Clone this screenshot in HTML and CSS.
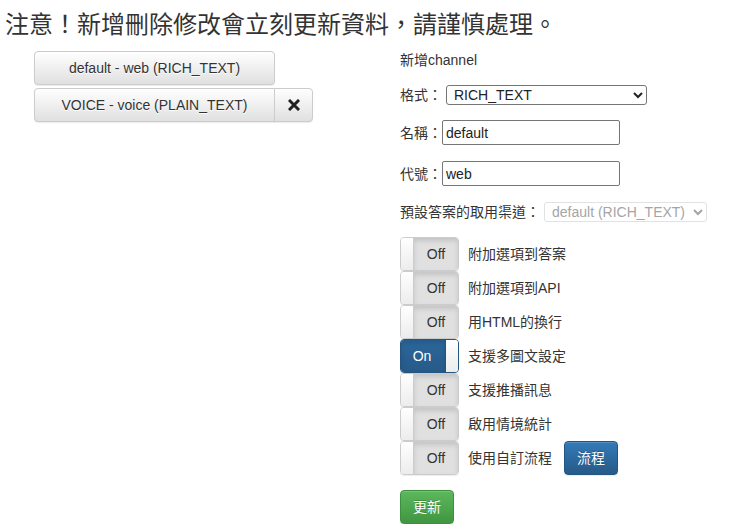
FILE: index.html
```html
<!DOCTYPE html>
<html lang="zh-Hant">
<head>
<meta charset="utf-8">
<link rel="stylesheet" href="styles.css">
</head>
<body>
<h1 class="notice">注意！新增刪除修改會立刻更新資料，請謹慎處理。</h1>
<div class="layout">
  <div class="channels">
    <div class="channel-row">
      <button class="btn btn-default channel-btn">default - web (RICH_TEXT)</button>
    </div>
    <div class="channel-row">
      <button class="btn btn-default channel-btn joined-left">VOICE - voice (PLAIN_TEXT)</button><button class="btn btn-default remove-btn"><svg width="12" height="12" viewBox="0 0 12 12"><path d="M2 2 L10 10 M10 2 L2 10" stroke="#222" stroke-width="3" stroke-linecap="square"/></svg></button>
    </div>
  </div>
  <div class="editor">
    <div class="heading">新增channel</div>
    <div class="field field-format">
      <label>格式：</label>
      <select class="sel sel-format"><option>RICH_TEXT</option></select>
    </div>
    <div class="field field-input">
      <label>名稱：</label><input class="txt" type="text" value="default">
    </div>
    <div class="field field-input">
      <label>代號：</label><input class="txt" type="text" value="web">
    </div>
    <div class="field field-default">
      <label>預設答案的取用渠道：</label>
      <select class="sel sel-default" disabled><option>default (RICH_TEXT)</option></select>
    </div>
    <div class="toggles">
      <div class="toggle-row"><span class="toggle off"><span class="handle"></span><span class="state">Off</span></span><span class="toggle-label">附加選項到答案</span></div>
      <div class="toggle-row"><span class="toggle off"><span class="handle"></span><span class="state">Off</span></span><span class="toggle-label">附加選項到API</span></div>
      <div class="toggle-row"><span class="toggle off"><span class="handle"></span><span class="state">Off</span></span><span class="toggle-label">用HTML的換行</span></div>
      <div class="toggle-row"><span class="toggle on"><span class="state">On</span><span class="handle"></span></span><span class="toggle-label">支援多圖文設定</span></div>
      <div class="toggle-row"><span class="toggle off"><span class="handle"></span><span class="state">Off</span></span><span class="toggle-label">支援推播訊息</span></div>
      <div class="toggle-row"><span class="toggle off"><span class="handle"></span><span class="state">Off</span></span><span class="toggle-label">啟用情境統計</span></div>
      <div class="toggle-row"><span class="toggle off"><span class="handle"></span><span class="state">Off</span></span><span class="toggle-label">使用自訂流程</span><button class="btn btn-primary flow-btn">流程</button></div>
    </div>
    <button class="btn btn-success save-btn">更新</button>
  </div>
</div>
</body>
</html>
```
FILE: styles.css
```css
html, body {
  margin: 0;
  padding: 0;
  background: #fff;
}
body {
  font-family: "Liberation Sans", "Noto Sans CJK TC", sans-serif;
  font-size: 14px;
  color: #333;
  line-height: 20px;
}
.notice {
  margin: 0;
  padding: 9px 0 0 5px;
  font-size: 24px;
  font-weight: normal;
  line-height: 32px;
  color: #333;
}
.layout {
  display: flex;
  margin-top: 10px;
}
.channels {
  box-sizing: border-box;
  width: 400px;
  padding-left: 34px;
}
.channel-row {
  display: flex;
  margin-bottom: 3px;
}
.btn {
  box-sizing: border-box;
  height: 34px;
  padding: 6px 12px;
  font-family: "Liberation Sans", "Noto Sans CJK TC", sans-serif;
  font-size: 14px;
  line-height: 20px;
  border: 1px solid transparent;
  border-radius: 4px;
  cursor: pointer;
}
.btn-default {
  color: #333;
  text-shadow: 0 1px 0 #fff;
  background-image: linear-gradient(to bottom, #fff 0, #e0e0e0 100%);
  border-color: #ccc;
  box-shadow: inset 0 1px 0 rgba(255,255,255,.15), 0 1px 1px rgba(0,0,0,.075);
}
.btn-primary {
  color: #fff;
  text-shadow: 0 -1px 0 rgba(0,0,0,.2);
  background-image: linear-gradient(to bottom, #337ab7 0, #265a88 100%);
  border-color: #245580;
  box-shadow: inset 0 1px 0 rgba(255,255,255,.15), 0 1px 1px rgba(0,0,0,.075);
}
.btn-success {
  color: #fff;
  text-shadow: 0 -1px 0 rgba(0,0,0,.2);
  background-image: linear-gradient(to bottom, #5cb85c 0, #419641 100%);
  border-color: #3e8f3e;
  box-shadow: inset 0 1px 0 rgba(255,255,255,.15), 0 1px 1px rgba(0,0,0,.075);
}
.channel-btn {
  width: 241px;
}
.joined-left {
  border-top-right-radius: 0;
  border-bottom-right-radius: 0;
}
.remove-btn {
  width: 39px;
  margin-left: -1px;
  border-top-left-radius: 0;
  border-bottom-left-radius: 0;
  display: flex;
  align-items: center;
  justify-content: center;
  padding: 0;
}
.editor {
  display: flex;
  flex-direction: column;
  align-items: flex-start;
}
.heading {
  line-height: 18px;
}
.field {
  display: flex;
  align-items: center;
}
.field label {
  white-space: nowrap;
}
.field-format {
  margin-top: 16px;
}
.field-input {
  margin-top: 15px;
}
.field-input + .field-input {
  margin-top: 16px;
}
.field-default {
  margin-top: 16px;
}
.sel {
  box-sizing: border-box;
  height: 20px;
  margin-left: 4px;
  font-family: "Liberation Sans", "Noto Sans CJK TC", sans-serif;
  font-size: 14px;
  color: #222;
  background: #fff;
  border: 1px solid #767676;
  border-radius: 3px;
  padding: 0 0 0 3px;
}
.sel-format {
  width: 201px;
}
.sel-default {
  width: 163px;
  color: #808080;
  border-color: #d6d6d6;
}
.txt {
  box-sizing: border-box;
  width: 178px;
  height: 25px;
  margin: 0;
  padding: 1px 3px;
  font-family: "Liberation Sans", "Noto Sans CJK TC", sans-serif;
  font-size: 14px;
  color: #222;
  border: 1px solid #767676;
  border-radius: 2px;
}
.toggles {
  margin-top: 15px;
  display: flex;
  flex-direction: column;
}
.toggle-row {
  display: flex;
  align-items: center;
  height: 34px;
}
.toggle {
  box-sizing: border-box;
  display: flex;
  width: 59px;
  height: 34px;
  border: 1px solid #ccc;
  border-radius: 4px;
  overflow: hidden;
  box-shadow: 0 1px 1px rgba(0,0,0,.075);
}
.toggle .handle {
  width: 12px;
  background-image: linear-gradient(to bottom, #fff 0, #ececec 100%);
}
.toggle.off .handle {
  border-right: 1px solid #ccc;
}
.toggle .state {
  flex: 1;
  display: flex;
  align-items: center;
  justify-content: center;
}
.toggle.off .state {
  background: #e0e0e0;
  color: #333;
  box-shadow: inset 0 3px 5px rgba(0,0,0,.125);
}
.toggle.on {
  border-color: #245580;
}
.toggle.on .state {
  background: linear-gradient(to bottom, #2c679b 0, #265a88 100%);
  color: #fff;
  box-shadow: inset 0 3px 5px rgba(0,0,0,.125);
  padding-right: 2px;
}
.toggle.on .handle {
  border-left: 1px solid #245580;
}
.toggle-label {
  margin-left: 9px;
}
.flow-btn {
  width: 54px;
  margin-left: 12px;
  padding: 6px 0;
}
.save-btn {
  width: 54px;
  margin-top: 15px;
  padding: 6px 0;
}
```
